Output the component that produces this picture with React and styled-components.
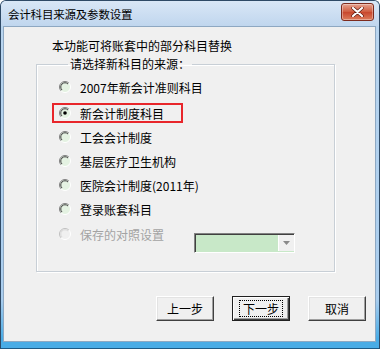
import React from 'react';
import styled, { createGlobalStyle } from 'styled-components';

const Global = createGlobalStyle`
  html, body {
    margin: 0;
    padding: 0;
    background: #ffffff;
  }
  body {
    font-family: "Noto Sans CJK SC", "DejaVu Sans", sans-serif;
    font-size: 12px;
    color: #000;
  }
`;

const Window = styled.div`
  width: 380px;
  height: 349px;
  box-sizing: border-box;
  display: flex;
  flex-direction: column;
  background: #b6d3ef;
  border: 1px solid #2f4a66;
  border-bottom-color: #1d5a86;
  border-radius: 6px 6px 0 0;
  overflow: hidden;
`;

const TitleBar = styled.div`
  height: 25px;
  flex-shrink: 0;
  display: flex;
  align-items: center;
  justify-content: space-between;
  padding: 0 5px 0 7px;
  background: linear-gradient(#d9e7f6, #c0d6ee);
`;

const Title = styled.span`
  font-size: 11.5px;
  color: #000;
  letter-spacing: -0.2px;
`;

const CloseButton = styled.div`
  width: 31px;
  height: 16px;
  margin-top: -4px;
  border: 1px solid #7d2a1d;
  border-radius: 3px;
  background: linear-gradient(#e6a28f, #cf5a3d 50%, #c8462c 51%, #dc7c5c);
  display: flex;
  align-items: center;
  justify-content: center;
  box-shadow: inset 0 0 0 1px rgba(255, 255, 255, 0.35);
`;

const Frame = styled.div`
  flex: 1;
  display: flex;
  padding: 0 3px 6px 2px;
  background: linear-gradient(#b9d5ef, #a9cdee 85%, #49ace6 97%);
`;

const Client = styled.div`
  flex: 1;
  background: #f0f0f0;
  border: 1px solid #8ea8c2;
  display: flex;
  flex-direction: column;
  padding: 10px 0 0 32px;
`;

const Intro = styled.div`
  padding-left: 16px;
  height: 18px;
  line-height: 18px;
`;

const Group = styled.fieldset`
  margin: 1px 0 0 0;
  width: 299px;
  height: 216px;
  box-sizing: border-box;
  border: 1px solid #c8cfd6;
  box-shadow: inset 1px 1px 0 #ffffff, 1px 1px 0 #ffffff;
  padding: 3px 0 0 22px;
  display: flex;
  flex-direction: column;
`;

const Legend = styled.legend`
  padding: 0 2px;
  margin-left: 9px;
  line-height: 16px;
`;

const Row = styled.label`
  position: relative;
  display: flex;
  align-items: center;
  height: 24px;
  gap: 9px;
  width: max-content;
  color: ${(p) => (p.$disabled ? '#a3a3a3' : '#000')};

  ${(p) =>
    p.$highlight &&
    `
    margin: 2px 0 0;
    &::after {
      content: '';
      position: absolute;
      left: -7px;
      top: 2px;
      width: 127px;
      height: 16px;
      border: 2px solid #e8262b;
    }
  `}
`;

const LastRow = styled.div`
  display: flex;
  align-items: flex-start;
  gap: 30px;
  margin-top: 1px;
`;

const Combo = styled.div`
  margin-top: 11px;
  width: 99px;
  height: 18px;
  display: flex;
  background: #c8e8c8;
  border: 1px solid;
  border-color: #828282 #ffffff #ffffff #828282;
  box-shadow: inset 1px 1px 0 #404040;
`;

const ComboArrow = styled.div`
  margin-left: auto;
  width: 15px;
  height: 16px;
  margin-top: 1px;
  background: #f0f0f0;
  display: flex;
  align-items: center;
  justify-content: center;
  border-left: 1px solid #ffffff;
`;

const ButtonBar = styled.div`
  display: flex;
  gap: 18px;
  margin: 24px 0 0 120px;
`;

const Button = styled.div`
  width: 58px;
  height: 25px;
  box-sizing: border-box;
  display: flex;
  align-items: center;
  justify-content: center;
  background: #f0f0f0;
  border: 1px solid;
  border-color: #ffffff #404040 #404040 #ffffff;
  box-shadow: inset -1px -1px 0 #a0a0a0, inset 1px 1px 0 #e3e3e3;
  font-size: 12px;

  ${(p) =>
    p.$default &&
    `
    border: 1px solid #202020;
    box-shadow: inset 1px 1px 0 #ffffff, inset -1px -1px 0 #404040, inset -2px -2px 0 #a0a0a0;
  `}
`;

const FocusRect = styled.span`
  border: 1px dotted #000;
  padding: 0 3px;
  line-height: 15px;
`;

const RadioDot = ({ checked, disabled }) => (
  <svg width="12" height="12" viewBox="0 0 12 12">
    <circle cx="6" cy="6" r="5.5" fill={disabled ? '#f0f0f0' : '#e4f2e2'} />
    <path d="M9.9 2.1 A5.5 5.5 0 0 0 2.1 9.9" stroke={disabled ? '#c0c0c0' : '#808080'} fill="none" strokeWidth="1" />
    <path d="M9 3 A4.2 4.2 0 0 0 3 9" stroke={disabled ? '#d8d8d8' : '#404040'} fill="none" strokeWidth="1" />
    <path d="M2.1 9.9 A5.5 5.5 0 0 0 9.9 2.1" stroke="#ffffff" fill="none" strokeWidth="1" />
    {checked && <circle cx="6" cy="6" r="1.8" fill="#000" />}
  </svg>
);

const options = [
  { label: '2007年新会计准则科目' },
  { label: '新会计制度科目', checked: true },
  { label: '工会会计制度' },
  { label: '基层医疗卫生机构' },
  { label: '医院会计制度(2011年)' },
  { label: '登录账套科目' },
];

export default function App() {
  return (
    <>
      <Global />
      <Window>
        <TitleBar>
          <Title>会计科目来源及参数设置</Title>
          <CloseButton>
            <svg width="13" height="10" viewBox="0 0 13 10">
              <path d="M2 1 L11 9 M11 1 L2 9" stroke="#5a1a10" strokeWidth="3.4" strokeLinecap="round" />
              <path d="M2 1 L11 9 M11 1 L2 9" stroke="#ffffff" strokeWidth="2.2" strokeLinecap="round" />
            </svg>
          </CloseButton>
        </TitleBar>
        <Frame>
          <Client>
            <Intro>本功能可将账套中的部分科目替换</Intro>
            <Group>
              <Legend>请选择新科目的来源：</Legend>
              {options.map((o) => (
                <Row key={o.label} $highlight={o.checked}>
                  <RadioDot checked={o.checked} />
                  {o.label}
                </Row>
              ))}
              <LastRow>
                <Row $disabled>
                  <RadioDot disabled />
                  保存的对照设置
                </Row>
                <Combo>
                  <ComboArrow>
                    <svg width="7" height="4" viewBox="0 0 7 4">
                      <path d="M0 0 H7 L3.5 4 Z" fill="#8a8a8a" />
                    </svg>
                  </ComboArrow>
                </Combo>
              </LastRow>
            </Group>
            <ButtonBar>
              <Button>上一步</Button>
              <Button $default>
                <FocusRect>下一步</FocusRect>
              </Button>
              <Button>取消</Button>
            </ButtonBar>
          </Client>
        </Frame>
      </Window>
    </>
  );
}
